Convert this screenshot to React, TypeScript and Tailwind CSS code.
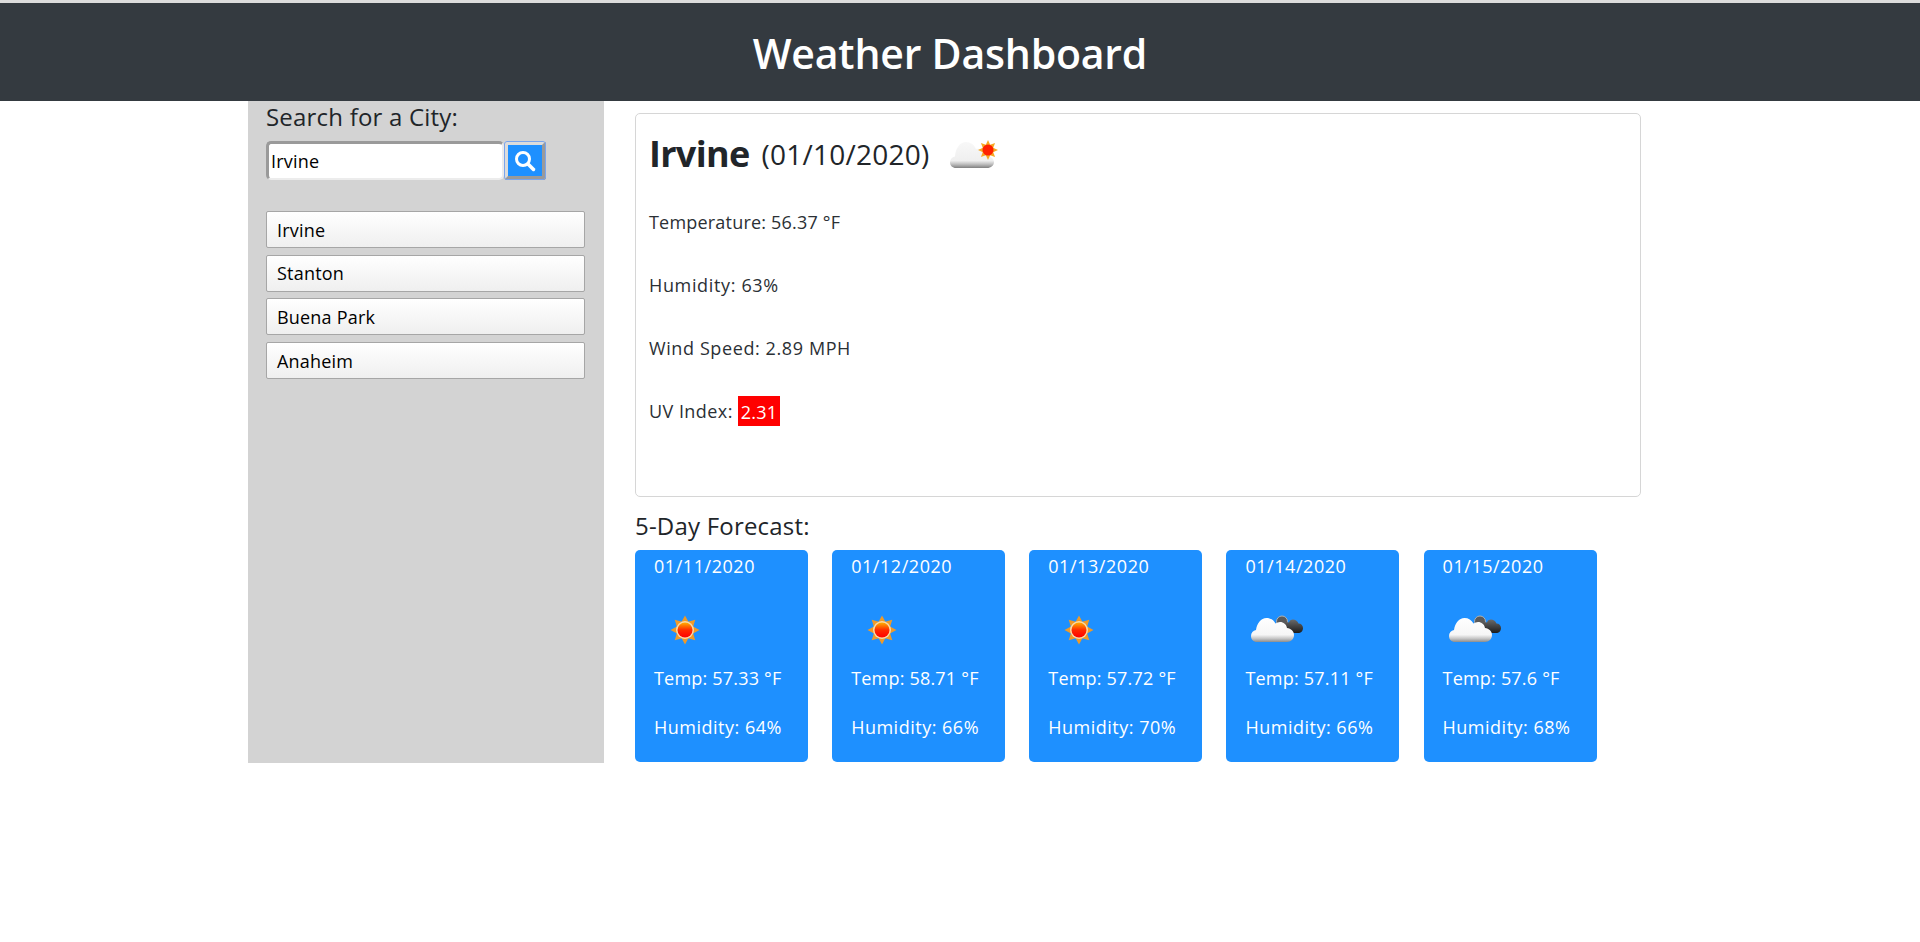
import React from 'react';

const FONT = "font-['Open_Sans','Noto_Sans',sans-serif]";

function Sun({ id }: { id: string }) {
  const rays = [0, 45, 90, 135, 180, 225, 270, 315];
  return (
    <svg width="30" height="30" viewBox="0 0 30 30">
      <defs>
        <linearGradient id={id} x1="0" y1="0" x2="0" y2="1">
          <stop offset="0" stopColor="#ffb000" />
          <stop offset="0.5" stopColor="#ff2a00" />
          <stop offset="1" stopColor="#ff0000" />
        </linearGradient>
      </defs>
      {rays.map((r) => (
        <polygon key={r} points="11.5,7 15,0.5 18.5,7" fill="#f09a28" transform={`rotate(${r} 15 15)`} />
      ))}
      <circle cx="15" cy="15" r="9" fill="#fbd9a6" />
      <circle cx="15" cy="15" r="7.500" fill={`url(#${id})`} />
    </svg>
  );
}

function Overcast({ id }: { id: string }) {
  return (
    <svg width="52" height="30" viewBox="0 0 52 30">
      <defs>
        <linearGradient id={`${id}w`} x1="0" y1="0" x2="0" y2="1">
          <stop offset="0" stopColor="#ffffff" />
          <stop offset="0.7" stopColor="#f6f6f6" />
          <stop offset="0.85" stopColor="#c8c8c8" />
          <stop offset="1" stopColor="#8d8d8d" />
        </linearGradient>
        <linearGradient id={`${id}d`} x1="0" y1="0" x2="0" y2="1">
          <stop offset="0" stopColor="#6a6a6a" />
          <stop offset="1" stopColor="#1c1c1c" />
        </linearGradient>
      </defs>
      <circle cx="31" cy="6.500" r="5.500" fill="#5a5a5a" stroke="#b0b0b0" />
      <path
        d="M32 18 L47 18 C50 18 52 16 52 13 C52 10.500 50 8.500 47.500 8.500 C46.500 6 44 4.500 42 4.500 C40 4.500 38.500 5.500 38 7.500 C35 6.500 31 9 31 13 Z"
        fill={`url(#${id}d)`}
      />
      <path
        d="M6 27 C2.500 27 0 24.500 0 21 C0 18 2 15.500 5 15 C6 8 10 3 15.500 3 C19.500 3 22.500 5 24.500 8.500 C26 7.500 27.500 7 29 7 C32.500 7 35.500 9.500 36 13 C40 13.500 43 16 43 20 C43 24 40 27 36 27 Z"
        fill={`url(#${id}w)`}
      />
    </svg>
  );
}

function CloudSun() {
  return (
    <svg width="50" height="30" viewBox="0 0 50 30">
      <defs>
        <linearGradient id="mainCloud" x1="0" y1="0" x2="0" y2="1">
          <stop offset="0" stopColor="#f8f8f8" />
          <stop offset="0.72" stopColor="#efefef" />
          <stop offset="0.86" stopColor="#bdbdbd" />
          <stop offset="1" stopColor="#808080" />
        </linearGradient>
      </defs>
      <path
        d="M7 29 C3.500 29 1 26.500 1 23.500 C1 20.500 3 18 6 17.500 C6.500 10 10.500 3 17 3 C21.500 3 25.500 6 27 10 C29 9.500 31 10 33 11.500 C35 13 36 14.500 36.500 16.500 C41 17 45 19.500 45 23 C45 26.500 42 29 38 29 Z"
        fill="url(#mainCloud)"
      />
      <g fill="#f7a823">
        {[0, 45, 90, 135, 180, 225, 270, 315].map((r) => (
          <polygon key={r} points="36.500,6.500 39,1 41.500,6.500" transform={`rotate(${r} 39 11)`} />
        ))}
      </g>
      <circle cx="39" cy="11" r="5.500" fill="#ff2200" />
    </svg>
  );
}

const CITIES = ['Irvine', 'Stanton', 'Buena Park', 'Anaheim'];

const FORECAST = [
  { date: '01/11/2020', temp: '57.33', hum: '64', icon: 'sun' },
  { date: '01/12/2020', temp: '58.71', hum: '66', icon: 'sun' },
  { date: '01/13/2020', temp: '57.72', hum: '70', icon: 'sun' },
  { date: '01/14/2020', temp: '57.11', hum: '66', icon: 'cloud' },
  { date: '01/15/2020', temp: '57.6', hum: '68', icon: 'cloud' },
];

export default function App() {
  return (
    <div className={`${FONT} min-h-[942px] bg-white text-[#212529] text-[18px] leading-[24px] tracking-[0.2px] border-t-[3px] border-[#dcdcdc]`}>
      <header className="h-[98px] bg-[#343a40] flex items-center justify-center pr-[20px] pt-[2px]">
        <h1 className="text-[41px] leading-[48px] font-semibold text-white tracking-[-0.2px]">Weather Dashboard</h1>
      </header>

      <div className="flex ml-[248px] w-[1424px]">
        <aside className="w-[356px] h-[662px] bg-[#d3d3d3] px-[18px]">
          <h2 className="text-[24px] leading-[32px] font-medium tracking-[0.2px]">Search for a City:</h2>
          <div className="flex mt-[8px] h-[39px]">
            <div className="w-[238px] h-[39px] border-2 border-t-[3px] border-l-[3px] border-[#9a9a9a] border-b-[#ececec] border-r-[#ececec] rounded-[5px] bg-white flex items-center px-[2px] text-black">
              Irvine
            </div>
            <button className="w-[42px] h-[39px] bg-[#1e90ff] border-4 border-t-[#dcdcdc] border-l-[#dcdcdc] border-r-[#9a9a9a] border-b-[#9a9a9a] outline outline-1 outline-[#7aa5ec] -outline-offset-1 rounded-[3px] flex items-center justify-center">
              <svg className="mt-[1px]" width="22" height="22" viewBox="0 0 22 22" fill="none" stroke="white">
                <circle cx="9" cy="9" r="6.500" strokeWidth="3" />
                <path d="M14 14 L19.500 19.500" strokeWidth="3.500" strokeLinecap="round" />
              </svg>
            </button>
          </div>
          <div className="mt-[31px] flex flex-col gap-[6.7px] w-[319px]">
            {CITIES.map((c) => (
              <button
                key={c}
                className="h-[37px] border border-[#a6a6a6] rounded-[2px] bg-gradient-to-b from-white to-[#efefef] text-left pl-[10px] text-black"
              >
                {c}
              </button>
            ))}
          </div>
        </aside>

        <main className="flex-1 pl-[31px] pr-[31px] pt-[12px]">
          <section className="h-[384px] border border-[#d6d6d6] rounded-[5px] px-[13px] pt-[16px] text-[#2b3035]">
            <h2 className="text-[36px] leading-[48px] font-bold flex items-center tracking-[-0.7px] text-[#212529]">
              Irvine
              <span className="font-normal text-[28px] ml-[12px] tracking-[0.25px]">(01/10/2020)</span>
              <span className="ml-[19px]"><CloudSun /></span>
            </h2>
            <div className="mt-[32px] flex flex-col gap-[39px]">
              <p>Temperature: 56.37 °F</p>
              <p className="tracking-[0.65px]">Humidity: 63%</p>
              <p className="tracking-[0.6px]">Wind Speed: 2.89 MPH</p>
              <p>
                <span className="tracking-[0.45px]">UV Index:</span>{' '}
                <span className="inline-block bg-[#ff0000] text-white px-[3px] h-[30px] pt-[1px] -mt-[5px] -mb-[1px] leading-[30px] align-middle">2.31</span>
              </p>
            </div>
          </section>

          <h3 className="text-[24px] leading-[32px] mt-[13px] font-medium tracking-[0.2px]">5-Day Forecast:</h3>
          <div className="flex gap-[24.15px] mt-[8px]">
            {FORECAST.map((d, i) => (
              <div key={d.date} className="w-[173px] h-[212px] bg-[#1e90ff] rounded-[5px] text-white pl-[19px]">
                <p className="pt-[4px] tracking-[0.55px]">{d.date}</p>
                <div className="mt-[37px] h-[30px]">
                  {d.icon === 'sun' ? (
                    <div className="ml-[16px]"><Sun id={`sun${i}`} /></div>
                  ) : (
                    <div className="ml-[6px]"><Overcast id={`over${i}`} /></div>
                  )}
                </div>
                <p className="mt-[21px]">Temp: {d.temp} °F</p>
                <p className="mt-[25px] tracking-[0.5px]">Humidity: {d.hum}%</p>
              </div>
            ))}
          </div>
        </main>
      </div>
    </div>
  );
}
